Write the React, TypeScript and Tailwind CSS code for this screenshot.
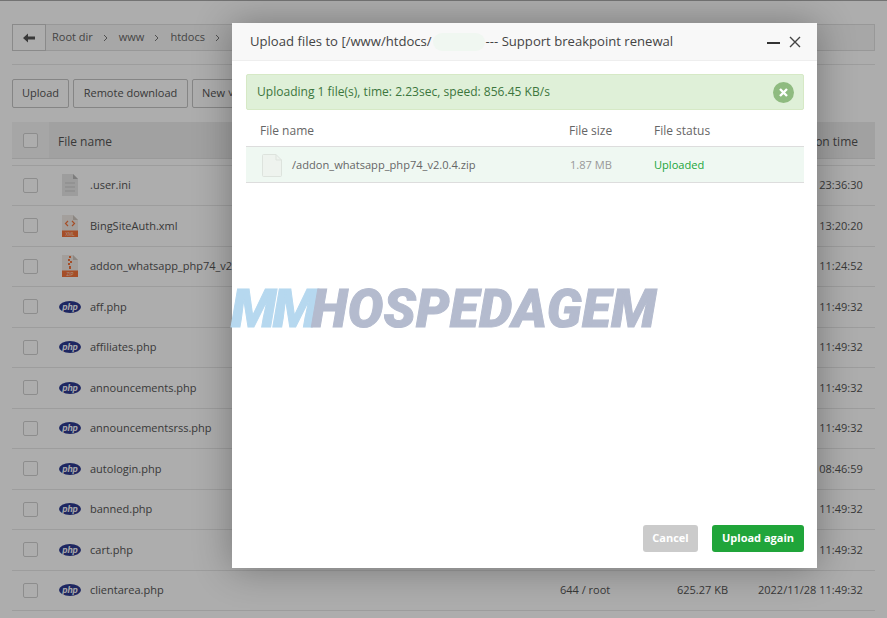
const rows: [string, string, string][] = [
  [".user.ini", "ini", "2023/01/05 23:36:30"],
  ["BingSiteAuth.xml", "xml", "2023/01/05 13:20:20"],
  ["addon_whatsapp_php74_v2.0.4.zip", "zip", "2023/01/06 11:24:52"],
  ["aff.php", "php", "2022/11/28 11:49:32"],
  ["affiliates.php", "php", "2022/11/28 11:49:32"],
  ["announcements.php", "php", "2022/11/28 11:49:32"],
  ["announcementsrss.php", "php", "2022/11/28 11:49:32"],
  ["autologin.php", "php", "2022/12/02 08:46:59"],
  ["banned.php", "php", "2022/11/28 11:49:32"],
  ["cart.php", "php", "2022/11/28 11:49:32"],
  ["clientarea.php", "php", "2022/11/28 11:49:32"],
];

function PhpIcon() {
  return (
    <svg width="22" height="12" viewBox="0 0 22 12" className="shrink-0">
      <ellipse cx="11" cy="6" rx="11" ry="6" fill="#2b3990" />
      <text x="11" y="8.6" textAnchor="middle" fontSize="8.5" fontWeight="700" fontStyle="italic" fill="#fff" fontFamily="Liberation Sans, sans-serif">php</text>
    </svg>
  );
}

function DocIcon({ kind }: { kind: string }) {
  if (kind === "ini") {
    return (
      <svg width="17" height="22" viewBox="0 0 17 22">
        <path d="M0 0h11l5 5v17H0z" fill="#e8e8e8" />
        <path d="M11 0l5 5h-5z" fill="#b8b8b8" />
        <path d="M3 9h10M3 13h10M3 17h10" stroke="#cacaca" strokeWidth="1.2" />
      </svg>
    );
  }
  const isXml = kind === "xml";
  return (
    <svg width="17" height="22" viewBox="0 0 17 22">
      <path d="M0 0h11l5 5v17H0z" fill="#f0ebe6" />
      <path d="M11 0l5 5h-5z" fill="#cfc8c0" />
      <rect x="0" y="15.500" width="16" height="6.500" fill="#f4743b" />
      <text x="8" y="20.800" textAnchor="middle" fontSize="4.500" fill="#ffd9c4" fontFamily="Liberation Sans, sans-serif">{isXml ? "XML" : "ZIP"}</text>
      {isXml ? (
        <path d="M6 6L3.500 8.500 6 11M10 6l2.500 2.500L10 11" fill="none" stroke="#f4743b" strokeWidth="1.200" />
      ) : (
        <path d="M7 1h2v2H7zM6 4h2v2H6zM8 6h2v2H8zM6 8h2v2H6zM7 11h2v3H7z" fill="#f4743b" />
      )}
    </svg>
  );
}

function Check() {
  return <span className="block h-[15px] w-[15px] rounded-[2px] border border-[#d0d0d0] bg-white" />;
}

function Btn({ children, className = "" }: { children: React.ReactNode; className?: string }) {
  return (
    <span className={`flex h-[29px] items-center justify-center rounded-[2px] border border-[#c4c4c4] bg-white text-[11px] whitespace-nowrap text-[#555] ${className}`}>
      {children}
    </span>
  );
}

function Sep() {
  return <svg width="6" height="8" viewBox="0 0 6 8"><path d="M1 1l3 3-3 3" fill="none" stroke="#777" strokeWidth="1" /></svg>;
}

export default function App() {
  return (
    <div className="relative h-[618px] w-[887px] overflow-hidden bg-white text-[11px] text-[#666]" style={{ fontFamily: '"Open Sans", "Liberation Sans", sans-serif' }}>
      {/* file manager page */}
      <div className="border-t border-[#aaa] px-[12px] pt-[23px]">
        <div className="flex h-[27px] w-[863px] items-center border border-[#e0e0e0] bg-[#f6f6f6]">
          <span className="-ml-px flex h-[27px] w-[34px] items-center justify-center border border-[#ccc] bg-white">
            <svg width="12" height="10" viewBox="0 0 12 10"><path d="M0 5l5-4.500V3.500h7v3H5v3z" fill="#555" /></svg>
          </span>
          <span className="ml-[6px] flex items-center gap-[10px] text-[#666]">
            <span>Root dir</span><Sep /><span>www</span><Sep /><span>htdocs</span><Sep />
          </span>
        </div>
        <div className="mt-[13px] w-[863px] border-t border-[#e8e8e8]" />
        <div className="mt-[14px] flex gap-[4px]">
          <Btn className="w-[57px]">Upload</Btn>
          <Btn className="w-[115px]">Remote download</Btn>
          <Btn className="w-[60px] justify-start pl-[9px]">New ˅</Btn>
        </div>
        <div className="mt-[14px] flex h-[37px] w-[863px] items-center border-b border-[#e4e4e4] bg-[#eeeeee] text-[#555]">
          <span className="flex h-full w-[37px] items-center justify-center bg-[#f5f5f5]"><Check /></span>
          <span className="ml-[9px] pt-[4px] text-[12px]">File name</span>
          <span className="mr-[17px] ml-auto pt-[4px] text-[12px]">Modification time</span>
        </div>
        <div className="mt-[5.500px] w-[863px] border-t border-[#e8e8e8]">
          {rows.map(([name, kind, time]) => (
            <div key={name} className="flex h-[40.500px] items-center border-b border-[#e8e8e8] pr-[11px] text-[#555]">
              <span className="flex w-[37px] justify-center"><Check /></span>
              <span className="ml-[10px] flex w-[22px] justify-center">
                {kind === "php" ? <PhpIcon /> : <DocIcon kind={kind} />}
              </span>
              <span className="ml-[9px]">{name}</span>
              <span className="ml-auto w-[117px]">644 / root</span>
              <span className="w-[81px]">625.27 KB</span>
              <span className="w-[106px] whitespace-nowrap">{time}</span>
            </div>
          ))}
        </div>
      </div>

      {/* dim layer */}
      <div className="absolute inset-0 bg-black/[0.32]" />

      {/* dialog */}
      <div className="absolute top-[23px] left-[232px] flex h-[545px] w-[585px] flex-col bg-white shadow-[0_1px_36px_rgba(0,0,0,0.32)]">
        <div className="flex h-[38px] shrink-0 items-center border-b border-[#eeeeee] bg-[#f8f8f8] pr-[16px] pl-[18px] text-[13.100px] text-[#444]">
          <span>Upload files to [/www/htdocs/</span>
          <span className="mx-[1px] h-[18px] w-[52px] rounded-full bg-[#f0f7f1]" />
          <span>--- Support breakpoint renewal</span>
          <span className="ml-auto flex items-center gap-[9px]">
            <span className="mt-[3px] block h-[2px] w-[13px] bg-[#333]" />
            <svg width="12" height="12" viewBox="0 0 12 12"><path d="M1 1l10 10M11 1L1 11" stroke="#444" strokeWidth="1.400" /></svg>
          </span>
        </div>
        <div className="flex flex-1 flex-col pt-[13px] pr-[13px] pb-[16px] pl-[14px]">
          <div className="flex h-[36px] items-center justify-between rounded-[2px] border border-[#d6e9c6] bg-[#dff0d8] pr-[9px] pl-[10px] text-[12.050px] text-[#3c763d]">
            <span>Uploading 1 file(s), time: 2.23sec, speed: 856.45 KB/s</span>
            <span className="flex h-[21px] w-[21px] items-center justify-center rounded-full bg-[#8fbb80]">
              <svg width="13" height="13" viewBox="0 0 13 13"><path d="M3 3l7 7M10 3l-7 7" stroke="#fff" strokeWidth="2.400" /></svg>
            </span>
          </div>
          <div className="flex h-[37px] items-center border-b border-[#ddd] pt-[5px] text-[12px] text-[#666]">
            <span className="ml-[14px] w-[309px]">File name</span>
            <span className="w-[85px]">File size</span>
            <span>File status</span>
          </div>
          <div className="flex h-[36px] items-center border-b border-[#ddd] bg-[#eff8f2] pt-[1px] text-[11.100px] text-[#666]">
            <svg width="21" height="23" viewBox="0 0 21 23" className="ml-[15px]">
              <path d="M1.500 1.500a1 1 0 0 1 1-1H15l5.500 5.500v15.500a1 1 0 0 1-1 1h-17a1 1 0 0 1-1-1z" fill="#eef3ee" stroke="#dde3dd" />
              <path d="M15 .5V6h5.500" fill="none" stroke="#dde3dd" />
            </svg>
            <span className="ml-[10px] w-[278px]">/addon_whatsapp_php74_v2.0.4.zip</span>
            <span className="w-[84px] text-[#999]">1.87 MB</span>
            <span className="text-[#20a53a]">Uploaded</span>
          </div>
          <div className="mt-auto flex justify-end gap-[14px]">
            <span className="flex h-[27px] w-[55px] items-center justify-center rounded-[3px] bg-[#cbcbcb] text-[11px] font-bold text-white">Cancel</span>
            <span className="flex h-[27px] w-[92px] items-center justify-center rounded-[3px] bg-[#20a53a] text-[11px] font-bold text-white">Upload again</span>
          </div>
        </div>
      </div>

      {/* watermark */}
      <div className="absolute top-[280px] left-[231px] flex h-[58px] items-center text-[53px] leading-none font-black whitespace-nowrap italic [-webkit-text-stroke:1px_currentColor]" style={{ fontFamily: "Roboto, sans-serif" }}>
        <span className="mr-[-3px] tracking-[-3.400px] text-[#b6d8ef]">MM</span>
        <span className="tracking-[0.300px] text-[#b4bbce]">HOSPEDAGEM</span>
      </div>
    </div>
  );
}
